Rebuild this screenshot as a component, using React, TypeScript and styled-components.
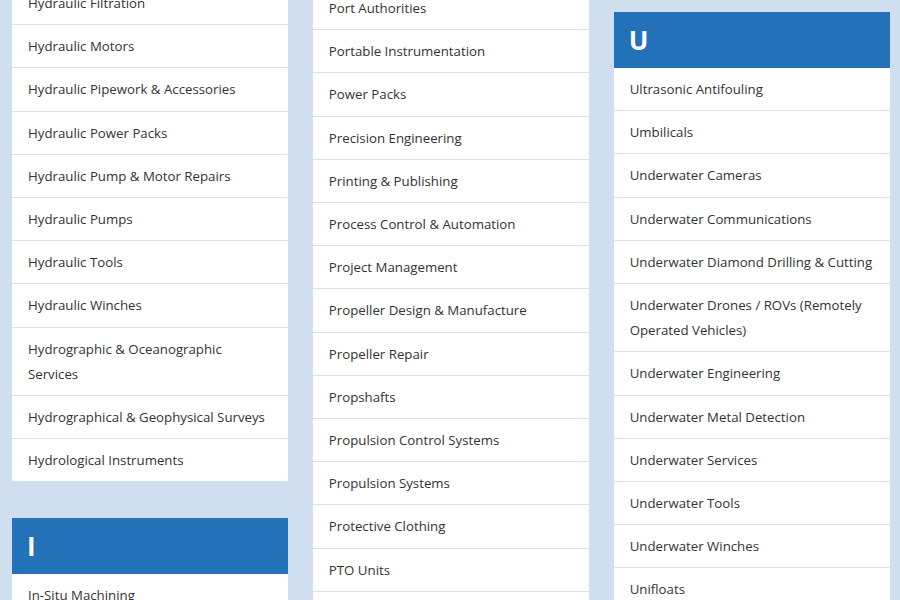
import React from "react";
import styled, { createGlobalStyle } from "styled-components";

const GlobalStyle = createGlobalStyle`
  html, body {
    margin: 0;
    padding: 0;
    background: #cfdff0;
    height: 600px;
    overflow: hidden;
  }
  * {
    box-sizing: border-box;
  }
`;

const Page = styled.div`
  display: grid;
  grid-template-columns: repeat(3, 1fr);
  column-gap: 24.5px;
  padding: 12px 10px 0 12px;
  font-family: "Open Sans", "Noto Sans", sans-serif;
  align-items: start;
`;

const Column = styled.div<{ $offset: number }>`
  display: flex;
  flex-direction: column;
  gap: 37px;
  margin-top: ${(p) => p.$offset}px;
`;

const Card = styled.div`
  background: #ffffff;
  display: flex;
  flex-direction: column;
`;

const Header = styled.div`
  height: 56px;
  background: #2271b9;
  color: #ffffff;
  font-size: 26px;
  font-weight: 700;
  display: flex;
  align-items: center;
  padding: 0 15px;
`;

const Row = styled.div`
  font-size: 13.25px;
  line-height: 25.2px;
  color: #333333;
  padding: 9px 16px 8px 16px;
  border-bottom: 1px solid #d6e3f1;
  &:last-child {
    border-bottom: none;
  }
`;

type Group = { letter?: string; items: string[] };

const columns: { offset: number; groups: Group[] }[] = [
  {
    offset: -30,
    groups: [
      {
        items: [
          "Hydraulic Filtration",
          "Hydraulic Motors",
          "Hydraulic Pipework & Accessories",
          "Hydraulic Power Packs",
          "Hydraulic Pump & Motor Repairs",
          "Hydraulic Pumps",
          "Hydraulic Tools",
          "Hydraulic Winches",
          "Hydrographic & Oceanographic Services",
          "Hydrographical & Geophysical Surveys",
          "Hydrological Instruments",
        ],
      },
      {
        letter: "I",
        items: ["In-Situ Machining", "Inspection Services", "Instrumentation"],
      },
    ],
  },
  {
    offset: -25,
    groups: [
      {
        items: [
          "Port Authorities",
          "Portable Instrumentation",
          "Power Packs",
          "Precision Engineering",
          "Printing & Publishing",
          "Process Control & Automation",
          "Project Management",
          "Propeller Design & Manufacture",
          "Propeller Repair",
          "Propshafts",
          "Propulsion Control Systems",
          "Propulsion Systems",
          "Protective Clothing",
          "PTO Units",
          "Pumps",
        ],
      },
    ],
  },
  {
    offset: 0,
    groups: [
      {
        letter: "U",
        items: [
          "Ultrasonic Antifouling",
          "Umbilicals",
          "Underwater Cameras",
          "Underwater Communications",
          "Underwater Diamond Drilling & Cutting",
          "Underwater Drones / ROVs (Remotely Operated Vehicles)",
          "Underwater Engineering",
          "Underwater Metal Detection",
          "Underwater Services",
          "Underwater Tools",
          "Underwater Winches",
          "Unifloats",
          "Uniforms",
        ],
      },
    ],
  },
];

const App: React.FC = () => {
  return (
    <>
      <GlobalStyle />
      <Page>
        {columns.map((col, ci) => (
          <Column key={ci} $offset={col.offset}>
            {col.groups.map((group, gi) => (
              <Card key={gi}>
                {group.letter ? <Header>{group.letter}</Header> : null}
                {group.items.map((item) => (
                  <Row key={item}>{item}</Row>
                ))}
              </Card>
            ))}
          </Column>
        ))}
      </Page>
    </>
  );
};

export default App;
